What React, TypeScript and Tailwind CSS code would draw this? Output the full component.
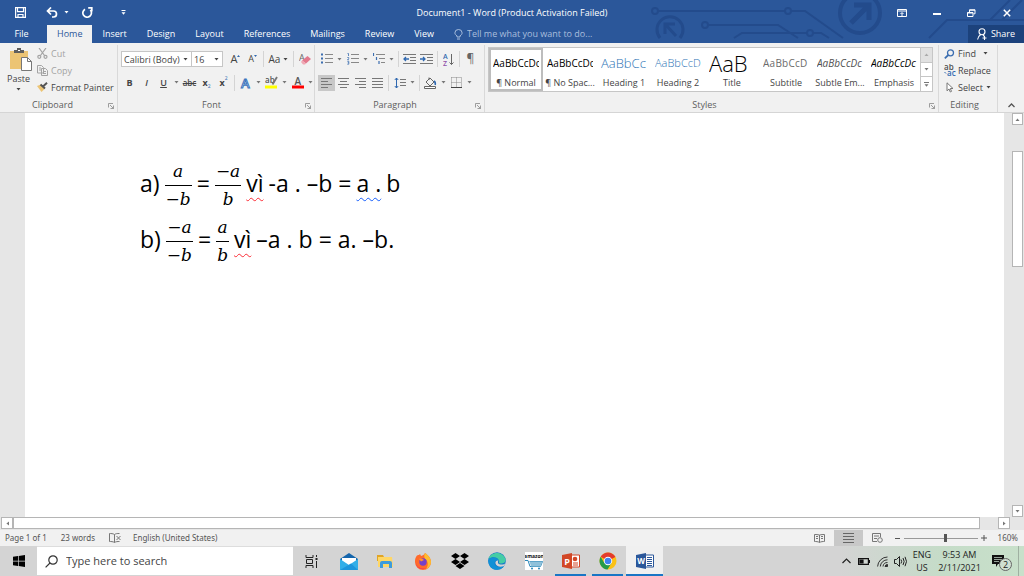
import type { ReactNode } from "react";

const tabs = ["Home", "Insert", "Design", "Layout", "References", "Mailings", "Review", "View"];

const styles = [
  { label: "¶ Normal", sample: "AaBbCcDc", look: "text-[10px] text-black", active: true },
  { label: "¶ No Spac...", sample: "AaBbCcDc", look: "text-[10px] text-black" },
  { label: "Heading 1", sample: "AaBbCc", look: "text-[13px] font-light text-[#2e74b5]" },
  { label: "Heading 2", sample: "AaBbCcD", look: "text-[11px] font-light text-[#2e74b5]" },
  { label: "Title", sample: "AaB", look: "text-[22px] font-light text-black" },
  { label: "Subtitle", sample: "AaBbCcD", look: "text-[10px] tracking-wide text-[#6b6b6b]" },
  { label: "Subtle Em...", sample: "AaBbCcDc", look: "text-[10px] italic text-[#505050]" },
  { label: "Emphasis", sample: "AaBbCcDc", look: "text-[10px] italic text-black" },
];

/** Small triangle used by every drop-down in the ribbon. */
function Caret({ className = "" }: { className?: string }) {
  return (
    <svg aria-hidden="true" width="5" height="3" viewBox="0 0 5 3" className={className} fill="currentColor">
      <path d="M0.5 0h4L2.5 2.6z" />
    </svg>
  );
}

function CaretButton({ label }: { label: string }) {
  return (
    <button type="button" aria-label={label} className="flex h-4 w-[9px] shrink-0 items-center justify-center text-[#777]">
      <Caret />
    </button>
  );
}

function Tool({ label, active, children }: { label: string; active?: boolean; children: ReactNode }) {
  return (
    <button
      type="button"
      aria-label={label}
      className={`flex h-4 w-[17px] shrink-0 items-center justify-center ${active ? "bg-[#c8c8c8]" : ""}`}
    >
      {children}
    </button>
  );
}

function Divider() {
  return <span className="mx-[2px] h-4 w-px shrink-0 bg-[#d4d4d4]" />;
}

function Launcher({ label }: { label: string }) {
  return (
    <button type="button" aria-label={label} className="absolute right-[3px] bottom-[3px] text-[#888]">
      <svg aria-hidden="true" width="6" height="6" viewBox="0 0 6 6" fill="none" stroke="currentColor" strokeWidth="0.8">
        <path d="M0.5 4.500V0.5H5M2 2l3.500 3.500M5.500 2.500v3h-3" />
      </svg>
    </button>
  );
}

function Group({ title, className = "", launcher = true, children }: {
  title: string;
  className?: string;
  launcher?: boolean;
  children: ReactNode;
}) {
  return (
    <section aria-label={title} className={`relative flex flex-col border-r border-[#d9d9d9] ${className}`}>
      <div className="h-[53px]">{children}</div>
      <div className="pr-3 text-center leading-[14px] text-[#5c5c5c]">{title}</div>
      {launcher && <Launcher label={`${title} settings`} />}
    </section>
  );
}

function Lines({ kind }: { kind: "left" | "center" | "right" | "justify" }) {
  const d = {
    left: "M0 .5h11M0 3.5h7M0 6.5h11M0 9.5h7",
    center: "M0 .5h11M2 3.5h7M0 6.5h11M2 9.5h7",
    right: "M0 .5h11M4 3.5h7M0 6.5h11M4 9.5h7",
    justify: "M0 .5h11M0 3.5h11M0 6.5h11M0 9.5h11",
  }[kind];
  return (
    <svg aria-hidden="true" width="11" height="10" viewBox="0 0 11 10" stroke="#777" strokeWidth="1">
      <path d={d} />
    </svg>
  );
}

function ListIcon({ kind }: { kind: "bullet" | "number" | "multi" }) {
  return (
    <svg aria-hidden="true" width="12" height="12" viewBox="0 0 12 12">
      {kind === "multi" ? (
        <>
          <path d="M3 1.5h9M6 5.5h6M8 9.5h4" stroke="#888" />
          <path d="M.5 0v3M3.5 4v3M6 8v3" stroke="#3c6eb0" strokeWidth="1.2" />
        </>
      ) : (
        <>
          <path d="M4 1.5h8M4 5.5h8M4 9.5h8" stroke="#888" />
          {kind === "bullet" ? (
            <path d="M0 .5h2v2H0zM0 4.5h2v2H0zM0 8.5h2v2H0z" fill="#3c6eb0" />
          ) : (
            <path d="M.5 .5h1v2.5M.3 4.5h1.4v1L.5 6.7h1.5M.3 8.3h1.5v2.9H.3M.8 9.7h1" fill="none" stroke="#3c6eb0" strokeWidth=".8" />
          )}
        </>
      )}
    </svg>
  );
}

function IndentIcon({ out }: { out?: boolean }) {
  return (
    <svg aria-hidden="true" width="13" height="11" viewBox="0 0 13 11" fill="none">
      <path d="M0 .5h13M7 3.5h6M7 6.5h6M0 9.5h13" stroke="#777" />
      <path d={out ? "M6 5H1M3 3L1 5l2 2" : "M0 5h5M3 3l2 2-2 2"} stroke="#2f68b0" strokeWidth="1.3" />
    </svg>
  );
}

function TitleArt() {
  return (
    <svg
      aria-hidden="true"
      width="404"
      height="39"
      viewBox="0 0 404 39"
      fill="none"
      stroke="#234b8c"
      strokeWidth="2"
      className="pointer-events-none absolute top-0 right-0"
    >
      <circle cx="35" cy="11" r="3" />
      <path d="M38 11h127M171 11h14l38 27" />
      <circle cx="168" cy="11" r="3" />
      <circle cx="85" cy="25" r="3" />
      <path d="M88 25h70l20 13M114 38l8-5h65M193 33h8l8 5" />
      <circle cx="190" cy="33" r="3" />
      <path d="M40 38a13 13 0 1 1 20 0" strokeWidth="3" />
      <path d="M56 36L46 25M45 34V24h10" strokeWidth="3" />
      <circle cx="240" cy="13" r="20" strokeWidth="4" />
      <path d="M231 23l17-17M234 5h15v15" strokeWidth="5" />
      <path d="M309 38l18-18h77M370 20l20-20M382 20l20-20" />
    </svg>
  );
}

function TitleBar() {
  return (
    <header className="relative h-[43px] shrink-0 bg-[#2b579a] text-white">
      <TitleArt />
      <div className="relative grid h-[25px] grid-cols-3">
        <div className="flex items-center pl-3">
          <button type="button" aria-label="Save" className="flex w-4 justify-center">
            <svg width="11" height="11" viewBox="0 0 11 11" fill="none" stroke="white" strokeWidth="1.2">
              <path d="M.6.6h9.8v9.8H.6zM2.5.6v4h6v-4M3 10.4V7.5h5v2.9" />
            </svg>
          </button>
          <button type="button" aria-label="Undo" className="ml-4 flex w-4 justify-center">
            <svg width="12" height="11" viewBox="0 0 12 11" fill="none" stroke="white" strokeWidth="1.7">
              <path d="M5 .5L1.5 4 5 7.5M2 4h5.5a3 3 0 0 1 0 6H6" />
            </svg>
          </button>
          <Caret className="ml-1" />
          <button type="button" aria-label="Redo" className="ml-[10px] flex w-4 justify-center">
            <svg width="11" height="12" viewBox="0 0 11 12" fill="none" stroke="white" strokeWidth="1.7">
              <path d="M3 2.2A4.3 4.3 0 1 0 8.3 3M6.2.8h3.6v3.6" />
            </svg>
          </button>
          <button type="button" aria-label="Customize Quick Access Toolbar" className="ml-5 flex w-4 justify-center">
            <svg width="5" height="5" viewBox="0 0 5 5" fill="white">
              <path d="M.5 0h4v1h-4zM.5 2.2h4L2.5 4.8z" />
            </svg>
          </button>
        </div>
        <h1 className="flex items-center justify-center whitespace-nowrap">Document1 - Word (Product Activation Failed)</h1>
        <div className="flex items-center justify-end pr-[10px]">
          <button type="button" aria-label="Ribbon display options" className="flex w-[35px] justify-center">
            <svg width="10" height="8" viewBox="0 0 10 8" fill="none" stroke="white">
              <path d="M.5.5h9v7h-9zM.5 2h9M3.500 5L5 3.500 6.500 5M5 4v3" />
            </svg>
          </button>
          <button type="button" aria-label="Minimize" className="flex w-[35px] justify-center">
            <svg width="8" height="8" viewBox="0 0 8 8"><path d="M0 5h8" stroke="white" strokeWidth="2" /></svg>
          </button>
          <button type="button" aria-label="Restore" className="flex w-[35px] justify-center">
            <svg width="9" height="8" viewBox="0 0 9 8" fill="none" stroke="white">
              <path d="M.5 3.500h5.500v4H.5zM2.500 3V.8h5.500v4H6.500M2.500 1.200h5.500M.5 4h5.500" />
            </svg>
          </button>
          <button type="button" aria-label="Close" className="ml-[10px] flex w-[15px] justify-center">
            <svg width="8" height="8" viewBox="0 0 8 8"><path d="M.8.8l6.400 6.400M7.200.8L.8 7.200" stroke="white" strokeWidth="1.500" /></svg>
          </button>
        </div>
      </div>
      <nav aria-label="Ribbon tabs" className="relative flex h-[18px] items-stretch">
        <button type="button" className="mr-1 w-[43px]">File</button>
        {tabs.map((tab) => (
          <button
            key={tab}
            type="button"
            className={`px-[10px] ${tab === "Home" ? "bg-[#f1f1f1] text-[#2b579a]" : ""}`}
          >
            {tab}
          </button>
        ))}
        <label className="ml-[10px] flex flex-1 items-center gap-1">
          <svg aria-hidden="true" width="9" height="11" viewBox="0 0 9 11" fill="none" stroke="#a9bedd">
            <path d="M3 8V6.800C1.500 6 .9 5 .9 3.900a3.600 3.400 0 0 1 7.200 0C8.100 5 7.500 6 6 6.800V8zM3 10h3" />
          </svg>
          <input
            aria-label="Tell me what you want to do"
            placeholder="Tell me what you want to do..."
            className="w-40 bg-transparent outline-none placeholder:text-[#a9bedd]"
          />
        </label>
        <button type="button" className="flex w-14 items-center justify-center gap-1 bg-[#1c427c]">
          <svg aria-hidden="true" width="10" height="12" viewBox="0 0 10 12" fill="none" stroke="white" strokeWidth="1.100">
            <circle cx="5" cy="3.800" r="3" />
            <path d="M.6 11.500c.3-2.500 1.500-4 3-4.800M6 7l1.500 1.500M5.500 10h4M7.500 8v4" />
          </svg>
          Share
        </button>
      </nav>
    </header>
  );
}

function Ribbon() {
  return (
    <div className="flex h-[70px] shrink-0 border-b border-[#d5d5d5] bg-[#f1f1f1] pt-[2px] text-[#444]">
      <Group title="Clipboard" className="w-[118px]">
        <div className="flex">
          <button type="button" className="flex w-[37px] flex-col items-center leading-[13px]">
            <svg aria-hidden="true" width="22" height="25" viewBox="0 0 22 25" className="mt-[2px] ml-1">
              <path d="M0 4h18v18H0z" fill="#ecc474" />
              <path d="M4 3h3V1h4v2h3v3H4z" fill="#5e5e5e" />
              <path d="M8 3h2v1H8z" fill="#fff" />
              <path d="M11.500 10.500h6l4 4v9h-10z" fill="#fff" stroke="#777" />
              <path d="M17.500 10.500v4h4" fill="none" stroke="#777" />
            </svg>
            Paste
            <Caret className="mt-[3px]" />
          </button>
          <div className="flex flex-col text-left">
            <button type="button" className="flex h-[17px] items-center gap-[3px] text-[#a3a3a3]">
              <svg aria-hidden="true" width="11" height="11" viewBox="0 0 11 11" fill="none" stroke="#a3a3a3" strokeWidth="1.200">
                <path d="M2 0l5.500 7.500M9 0L3.500 7.500" />
                <circle cx="2.300" cy="8.800" r="1.500" />
                <circle cx="8.500" cy="8.800" r="1.500" />
              </svg>
              Cut
            </button>
            <button type="button" className="flex h-[17px] items-center gap-[3px] text-[#a3a3a3]">
              <svg aria-hidden="true" width="11" height="11" viewBox="0 0 11 11" fill="#f1f1f1" stroke="#a3a3a3">
                <path d="M.5.5h4l2 2v5.500h-6zM4.500 3.500h4l2 2v5h-6zM6 6.500h3M6 8.500h3M2 3h2M2 5h2" />
              </svg>
              Copy
            </button>
            <button type="button" className="flex h-[17px] items-center gap-[3px] whitespace-nowrap">
              <svg aria-hidden="true" width="11" height="11" viewBox="0 0 11 11">
                <path d="M0 4l4-1.500L7.500 7 4.500 10z" fill="#ecc474" />
                <path d="M3.500 2.500l4.500 4M6 4.500L10 .8" stroke="#555" strokeWidth="2" />
              </svg>
              Format Painter
            </button>
          </div>
        </div>
      </Group>

      <Group title="Font" className="w-[197px] pl-[3px]">
        <div className="flex h-[25px] items-center pt-[3px]">
          <div className="relative h-4 w-[71px]">
            <select aria-label="Font" className="h-4 w-full appearance-none border border-[#c6c6c6] bg-white px-[2px] leading-none">
              <option>Calibri (Body)</option>
            </select>
            <Caret className="pointer-events-none absolute top-[7px] right-1" />
          </div>
          <div className="relative -ml-px h-4 w-8">
            <select aria-label="Font size" className="h-4 w-full appearance-none border border-[#c6c6c6] bg-white px-[2px] leading-none">
              <option>16</option>
            </select>
            <Caret className="pointer-events-none absolute top-[7px] right-1" />
          </div>
          <span className="w-1" />
          <Tool label="Grow font">
            <span className="text-[11px]">A</span>
            <svg aria-hidden="true" width="3" height="8" viewBox="0 0 3 8"><path d="M0 2l1.500-2L3 2z" fill="#2f68b0" /></svg>
          </Tool>
          <Tool label="Shrink font">
            <span>A</span>
            <svg aria-hidden="true" width="3" height="8" viewBox="0 0 3 8"><path d="M0 0h3L1.500 2z" fill="#2f68b0" /></svg>
          </Tool>
          <Divider />
          <button type="button" aria-label="Change case" className="flex w-[25px] items-center justify-center gap-[3px] text-[10px]">
            Aa
            <Caret />
          </button>
          <Divider />
          <Tool label="Clear formatting">
            <svg width="12" height="12" viewBox="0 0 12 12">
              <text x="0" y="8" fontSize="9" fill="#666">A</text>
              <path d="M3 7.500L8.500 3 12 6 7 10.500z" fill="#e3798d" />
              <path d="M3 7.500l4 3-1 1H4L2 9z" fill="#f0a8b4" />
            </svg>
          </Tool>
        </div>
        <div className="flex h-[25px] items-center">
          <Tool label="Bold"><b>B</b></Tool>
          <Tool label="Italic"><i className="font-semibold">I</i></Tool>
          <Tool label="Underline"><u className="font-semibold">U</u></Tool>
          <CaretButton label="Underline style" />
          <Tool label="Strikethrough"><s className="text-[8px] font-semibold">abc</s></Tool>
          <Tool label="Subscript"><b>x</b><span className="mt-2 text-[5px] text-[#2f68b0]">2</span></Tool>
          <Tool label="Superscript"><b>x</b><span className="mb-2 text-[5px] text-[#2f68b0]">2</span></Tool>
          <Divider />
          <Tool label="Text effects">
            <svg width="12" height="12" viewBox="0 0 12 12">
              <text x="1" y="10.500" fontSize="13" fontWeight="600" fill="#fff" stroke="#3c74bd" strokeWidth="1">A</text>
            </svg>
          </Tool>
          <CaretButton label="Text effects menu" />
          <Tool label="Highlight color">
            <svg width="13" height="13" viewBox="0 0 13 13">
              <text x="0" y="7" fontSize="8" fontWeight="600" fill="#555">ab</text>
              <path d="M12 1L7.500 8.500" stroke="#777" strokeWidth="1.800" />
              <path d="M0 9.500h12v3H0z" fill="#ff0" />
            </svg>
          </Tool>
          <CaretButton label="Highlight colors" />
          <Tool label="Font color">
            <svg width="12" height="13" viewBox="0 0 12 13">
              <text x="2.500" y="8.500" fontSize="10" fontWeight="600" fill="#555">A</text>
              <path d="M0 9.500h12v3H0z" fill="#f00" />
            </svg>
          </Tool>
          <CaretButton label="Font colors" />
        </div>
      </Group>

      <Group title="Paragraph" className="w-[170px] pl-[3px]">
        <div className="flex h-[25px] items-center pt-[3px]">
          <Tool label="Bullets"><ListIcon kind="bullet" /></Tool>
          <CaretButton label="Bullet library" />
          <Tool label="Numbering"><ListIcon kind="number" /></Tool>
          <CaretButton label="Numbering library" />
          <Tool label="Multilevel list"><ListIcon kind="multi" /></Tool>
          <CaretButton label="List library" />
          <Divider />
          <Tool label="Decrease indent"><IndentIcon out /></Tool>
          <Tool label="Increase indent"><IndentIcon /></Tool>
          <Divider />
          <Tool label="Sort">
            <svg width="12" height="13" viewBox="0 0 12 13" fill="none">
              <text x="0" y="6" fontSize="7" fontWeight="600" fill="#2f68b0">A</text>
              <text x="0" y="12.500" fontSize="7" fontWeight="600" fill="#8f4fa8">Z</text>
              <path d="M8.500 1v10.500M6.500 9.500l2 2 2-2" stroke="#666" />
            </svg>
          </Tool>
          <Divider />
          <Tool label="Show formatting marks"><span className="text-[12px] text-[#666]">¶</span></Tool>
        </div>
        <div className="flex h-[25px] items-center">
          <Tool label="Align left" active><Lines kind="left" /></Tool>
          <Tool label="Center"><Lines kind="center" /></Tool>
          <Tool label="Align right"><Lines kind="right" /></Tool>
          <Tool label="Justify"><Lines kind="justify" /></Tool>
          <Divider />
          <Tool label="Line spacing">
            <svg width="12" height="12" viewBox="0 0 12 12" fill="none">
              <path d="M2.500 1v10M.8 3l1.700-2 1.700 2M.8 9l1.700 2 1.700-2" stroke="#2f68b0" />
              <path d="M6 2.500h6M6 5.500h6M6 8.500h6" stroke="#777" />
            </svg>
          </Tool>
          <CaretButton label="Line spacing options" />
          <Divider />
          <Tool label="Shading">
            <svg width="13" height="12" viewBox="0 0 13 12" fill="none" stroke="#666">
              <path d="M2 5l4-4 4 4-4 4zM5 3V.5" />
              <path d="M10 4c1.500 1 1.500 2.500 1.200 4" stroke="#2f68b0" strokeWidth="1.600" />
              <path d="M.5 9.500h11v2H.5z" fill="#fff" />
            </svg>
          </Tool>
          <CaretButton label="Shading colors" />
          <Tool label="Borders">
            <svg width="11" height="11" viewBox="0 0 11 11" fill="none" stroke="#888">
              <path d="M.5.5h10v10M.5.5v10M5.500.5v10M.5 5.500h10" strokeDasharray="1 1" />
              <path d="M0 10.500h11" stroke="#444" />
            </svg>
          </Tool>
          <CaretButton label="Border options" />
        </div>
      </Group>

      <Group title="Styles" className="min-w-0 flex-1 pr-[5px] pl-[3px]">
        <div className="mt-[2px] flex h-[45px] border border-[#c6c6c6] bg-white">
          <div className="flex min-w-0 flex-1 overflow-hidden">
            {styles.map((s) => (
              <button
                key={s.label}
                type="button"
                className={`flex w-[54px] shrink-0 flex-col items-center border-2 ${s.active ? "border-[#bdbdbd]" : "border-transparent"}`}
              >
                <span className={`h-[26px] w-[46px] overflow-hidden text-left leading-[26px] whitespace-nowrap ${s.look}`}>{s.sample}</span>
                <span className="leading-[13px] whitespace-nowrap">{s.label}</span>
              </button>
            ))}
          </div>
          <div className="flex w-3 flex-col divide-y divide-[#c6c6c6] border-l border-[#c6c6c6] text-[#777]">
            <button type="button" aria-label="Previous styles" className="flex flex-1 items-center justify-center bg-[#e1e1e1] text-[#aaa]">
              <Caret className="rotate-180" />
            </button>
            <button type="button" aria-label="Next styles" className="flex flex-1 items-center justify-center"><Caret /></button>
            <button type="button" aria-label="More styles" className="flex flex-1 items-center justify-center">
              <svg width="5" height="5" viewBox="0 0 5 5" fill="currentColor"><path d="M0 0h5v1H0zM.5 2.200h4L2.500 4.800z" /></svg>
            </button>
          </div>
        </div>
      </Group>

      <Group title="Editing" launcher={false} className="w-[59px] pl-[5px]">
        <div className="flex flex-col">
          <button type="button" className="flex h-[17px] items-center gap-[3px]">
            <svg aria-hidden="true" width="11" height="10" viewBox="0 0 11 10" fill="none" stroke="#3c6eb0" strokeWidth="1.300">
              <circle cx="6.500" cy="3.800" r="3" />
              <path d="M4.300 6L.8 9.300" strokeWidth="1.800" />
            </svg>
            Find
            <Caret className="ml-1" />
          </button>
          <button type="button" className="flex h-[17px] items-center gap-[2px]">
            <svg aria-hidden="true" width="12" height="13" viewBox="0 0 12 13">
              <text x="0" y="6" fontSize="8" fontWeight="600" fill="#4f4f4f">ab</text>
              <text x="3" y="12" fontSize="8" fontWeight="600" fill="#2f68b0">ac</text>
              <path d="M.5 8l1.500 1.500" stroke="#2f68b0" />
            </svg>
            Replace
          </button>
          <button type="button" className="flex h-[17px] items-center gap-[3px]">
            <svg aria-hidden="true" width="11" height="11" viewBox="0 0 11 11" fill="#fff" stroke="#777">
              <path d="M3 .8v8l2-1.800 1.300 3 1.200-.6L6.300 6.500H9z" />
            </svg>
            Select
            <Caret />
          </button>
        </div>
      </Group>

      <div className="flex w-[26px] items-end justify-center pb-1">
        <button type="button" aria-label="Collapse the ribbon">
          <svg width="7" height="5" viewBox="0 0 7 5" fill="none" stroke="#555" strokeWidth="1.300"><path d="M.5 4l3-3 3 3" /></svg>
        </button>
      </div>
    </div>
  );
}

function Fraction({ top, bottom }: { top: string; bottom: string }) {
  return (
    <span className="flex flex-col pt-1 text-center font-['DejaVu_Serif','Liberation_Serif',serif] text-[17px] leading-[27px] italic">
      <span className="border-b border-black px-px">{top}</span>
      <span className="px-px">{bottom}</span>
    </span>
  );
}

/** Wavy proofing line under a word; red for spelling, blue for grammar. */
function Proofed({ kind, children }: { kind: "spelling" | "grammar"; children: ReactNode }) {
  return (
    <span
      className={`underline decoration-wavy decoration-1 underline-offset-[5px] ${kind === "spelling" ? "decoration-red-500" : "decoration-blue-600"}`}
    >
      {children}
    </span>
  );
}

function Document() {
  return (
    <main className="flex min-h-0 flex-1 bg-[#e6e6e6]">
      <article
        lang="vi"
        className="ml-[25px] flex-1 bg-white pt-[42px] pl-[115px] font-['Open_Sans',sans-serif] text-[23px] text-black"
      >
        <p className="flex h-14 items-center gap-[5px] whitespace-nowrap">
          <span>a)</span>
          <Fraction top="a" bottom="−b" />
          <span>=</span>
          <Fraction top="−a" bottom="b" />
          <Proofed kind="spelling">vì</Proofed>
          <span>-a . –b =</span>
          <Proofed kind="grammar">a .</Proofed>
          <span>b</span>
        </p>
        <p className="flex h-14 items-center gap-[5px] whitespace-nowrap">
          <span>b)</span>
          <Fraction top="−a" bottom="−b" />
          <span>=</span>
          <Fraction top="a" bottom="b" />
          <Proofed kind="spelling">vì</Proofed>
          <span>–a . b = a. –b.</span>
        </p>
      </article>
      <div className="ml-2 flex w-3 flex-col pr-px">
        <button type="button" aria-label="Scroll up" className="flex h-3 items-center justify-center border border-[#b5b5b5] bg-white text-[#777]">
          <Caret className="rotate-180" />
        </button>
        <div className="flex-1 pt-[26px]">
          <div className="h-[116px] border border-[#b5b5b5] bg-white" />
        </div>
        <button type="button" aria-label="Scroll down" className="flex h-3 items-center justify-center border border-[#b5b5b5] bg-white text-[#777]">
          <Caret />
        </button>
      </div>
    </main>
  );
}

function HorizontalScroll() {
  return (
    <div className="flex h-[13px] shrink-0 bg-[#e6e6e6] pb-px pl-px text-[#777]">
      <button type="button" aria-label="Scroll left" className="flex w-3 items-center justify-center border border-[#b5b5b5] bg-white">
        <Caret className="rotate-90" />
      </button>
      <div className="flex-1 border border-[#b5b5b5] bg-white" />
      <button type="button" aria-label="Scroll right" className="mr-[14px] ml-[18px] flex w-3 items-center justify-center border border-[#b5b5b5] bg-white">
        <Caret className="-rotate-90" />
      </button>
    </div>
  );
}

function StatusBar() {
  return (
    <footer className="flex h-4 shrink-0 items-center bg-[#f1f1f1] pl-[5px] font-['Noto_Sans',sans-serif] text-[8px] text-[#555]">
      <span>Page 1 of 1</span>
      <span className="ml-[14px]">23 words</span>
      <button type="button" aria-label="Proofing errors" className="ml-[14px]">
        <svg width="12" height="10" viewBox="0 0 12 10" fill="none" stroke="#777">
          <path d="M5.500 1.500C4 .5 2 .5.5.5v8c1.500 0 3.500 0 5 1zM5.500 1.500C7 .5 8 .5 10.500.5M5.500 9.500c1.500-1 3-1 5-1M7.500 3l4 4M11.500 3l-4 4" />
        </svg>
      </button>
      <span className="ml-3 flex-1">English (United States)</span>
      <button type="button" aria-label="Read mode" className="flex h-4 w-[29px] items-center justify-center">
        <svg width="11" height="9" viewBox="0 0 11 9" fill="none" stroke="#777">
          <path d="M5.500 1C4 .5 2 .5.5.5v7c1.500 0 3.500 0 5 1 1.500-1 3.500-1 5-1v-7c-1.500 0-3.500 0-5 .5v7.500M2 2.500h2M2 4.500h2M7 2.500h2M7 4.500h2" />
        </svg>
      </button>
      <button type="button" aria-label="Print layout" className="flex h-4 w-[29px] items-center justify-center bg-[#c8c8c8]">
        <svg width="11" height="10" viewBox="0 0 11 10" stroke="#666"><path d="M0 .5h11M0 3.500h11M0 6.500h11M0 9.500h11" /></svg>
      </button>
      <button type="button" aria-label="Web layout" className="flex h-4 w-[29px] items-center justify-center">
        <svg width="11" height="10" viewBox="0 0 11 10" fill="none" stroke="#777">
          <path d="M8.500 4V.5h-8v8H5M2 3h5M2 5.500h3" />
          <circle cx="8" cy="7" r="2.300" />
        </svg>
      </button>
      <button type="button" aria-label="Zoom out" className="ml-[3px] flex w-[6px] justify-center">
        <svg width="5" height="5" viewBox="0 0 5 5" stroke="#555"><path d="M0 2.500h5" /></svg>
      </button>
      <input
        type="range"
        aria-label="Zoom"
        min={0}
        max={100}
        defaultValue={57}
        className="mx-[3px] h-2 w-[74px] appearance-none bg-[linear-gradient(#999,#999)] bg-[length:100%_1px] bg-center bg-no-repeat [&::-webkit-slider-thumb]:h-2 [&::-webkit-slider-thumb]:w-[3px] [&::-webkit-slider-thumb]:appearance-none [&::-webkit-slider-thumb]:bg-[#555]"
      />
      <button type="button" aria-label="Zoom in" className="flex w-[6px] justify-center">
        <svg width="6" height="6" viewBox="0 0 6 6" stroke="#555"><path d="M0 3h6M3 0v6" /></svg>
      </button>
      <span className="mr-[6px] ml-[11px]">160%</span>
    </footer>
  );
}

const apps: { name: string; state?: "open" | "active"; icon: ReactNode }[] = [
  {
    name: "Task view",
    icon: (
      <svg width="13" height="13" viewBox="0 0 13 13" fill="none" stroke="#222">
        <path d="M1 0v2.500h7V0M1 13v-2.500h7V13M1.500 4.500h6v4h-6zM11.500 0v2M11.500 6v7" />
        <path d="M10.500 3h2v2h-2z" fill="#222" stroke="none" />
      </svg>
    ),
  },
  {
    name: "Mail",
    icon: (
      <svg width="18" height="17" viewBox="0 0 18 17">
        <path d="M0 6l9-6 9 6v11H0z" fill="#1465ac" />
        <path d="M2 5h14v7H2z" fill="#fff" />
        <path d="M0 6l9 6 9-6v11H0z" fill="#31aee8" />
        <path d="M0 17l11-6.500L18 17z" fill="#1c95dc" />
      </svg>
    ),
  },
  {
    name: "File Explorer",
    icon: (
      <svg width="17" height="15" viewBox="0 0 17 15">
        <path d="M0 1h6l1 2h8v4H0z" fill="#e0a526" />
        <path d="M1 3h14l1 10H1z" fill="#ffd766" />
        <path d="M3 14V9q0-2 2-2h8q2 0 2 2v5h-3v-4H6v4z" fill="#3d9bdc" />
      </svg>
    ),
  },
  {
    name: "Firefox",
    icon: (
      <svg width="18" height="18" viewBox="0 0 18 18">
        <path d="M2 5C3 3 4 3 5 3l1-1 1 2c2-1 3-1 4-3 3 2 6 5 6 9a8 8 0 0 1-16 0c0-2 0-3 1-5z" fill="#ff6a2b" />
        <path d="M11 1c3 2 6 5 6 9 0 3-2 6-5 7 3-4 2-8-1-10-1-2-1-4 0-6z" fill="#ffbd2e" />
        <path d="M1.500 8c0 7 6 10 11 8-3 2-11 2-11-8z" fill="#f0315f" />
        <circle cx="9" cy="10" r="3.700" fill="#7540c8" />
        <path d="M5 7c2-1 4 0 5 1l-3 1.500z" fill="#ff922e" />
      </svg>
    ),
  },
  {
    name: "Dropbox",
    icon: (
      <svg width="18" height="16" viewBox="0 0 18 16" fill="#000">
        <path d="M4.500 0L9 3 4.500 6 0 3zM13.500 0L18 3l-4.500 3L9 3zM4.500 6L9 9l-4.500 3L0 9zM13.500 6L18 9l-4.500 3L9 9zM9 10l4.500 3L9 16l-4.500-3z" />
      </svg>
    ),
  },
  {
    name: "Edge",
    icon: (
      <svg width="18" height="18" viewBox="0 0 18 18">
        <circle cx="9" cy="9" r="8.800" fill="#1478c8" />
        <path d="M.5 7C2 0 14-2 17.500 7c.6 4-3 5-5.500 4.500-2-.5-.5-1.500-1-3C10 5 4 4 .5 7z" fill="#45cda5" />
        <path d="M.3 8C3 4 10 5 10.500 8.500 8 7.500 6 10 7 12.500S12 16 16 14c-5 7-16 4-15.700-6z" fill="#1190d6" />
        <path d="M10.500 8.500c-1 1.500-.8 3.500 2 4 2 .4 4-.3 5-1.500l-1.500 3c-4 2-8 0-8.500-2.500S9 8.500 10.500 8.500z" fill="#d4d4d4" />
      </svg>
    ),
  },
  {
    name: "Amazon",
    icon: (
      <svg width="18" height="18" viewBox="0 0 18 18">
        <path d="M0 0h18v18H0z" fill="#fff" />
        <text x="9" y="6" textAnchor="middle" fontSize="5" fontWeight="700" fill="#111">amazon</text>
        <path d="M0 8.500h3l2 6h10.500l2-5h-13" fill="none" stroke="#2a86b8" />
        <path d="M4.500 9.500h13l-2 5H6z" fill="#8fc1da" />
        <circle cx="7" cy="16.500" r="1" fill="#2a86b8" />
        <circle cx="14" cy="16.500" r="1" fill="#2a86b8" />
      </svg>
    ),
  },
  {
    name: "PowerPoint",
    state: "open",
    icon: (
      <svg width="18" height="16" viewBox="0 0 18 16">
        <path d="M9 2h8.500v12H9z" fill="#fff" stroke="#d24726" />
        <path d="M11 10h5M11 12h5" stroke="#d24726" />
        <circle cx="13" cy="6" r="2.300" fill="#d24726" />
        <path d="M0 2l10-2v16L0 14z" fill="#d24726" />
        <text x="5" y="11.500" textAnchor="middle" fontSize="9" fontWeight="700" fill="#fff">P</text>
      </svg>
    ),
  },
  {
    name: "Chrome",
    state: "open",
    icon: (
      <svg width="18" height="18" viewBox="0 0 18 18">
        <circle cx="9" cy="9" r="8.500" fill="#fbc116" />
        <path d="M9 9L1.640 4.750A8.500 8.500 0 0 1 16.360 4.750z" fill="#e33b2e" />
        <path d="M9 4.750h7.360L9 9z" fill="#e33b2e" />
        <path d="M1.640 4.750A8.500 8.500 0 0 0 8.500 17.480L12.500 11 5.400 11z" fill="#269a48" />
        <circle cx="9" cy="9" r="4.200" fill="#fff" />
        <circle cx="9" cy="9" r="3.300" fill="#3f82ee" />
      </svg>
    ),
  },
  {
    name: "Word",
    state: "active",
    icon: (
      <svg width="18" height="16" viewBox="0 0 18 16">
        <path d="M9 2h8.500v12H9z" fill="#fff" stroke="#2b579a" />
        <path d="M11 4.500h5M11 6.500h5M11 8.500h5M11 10.500h5M11 12.500h5" stroke="#2b579a" />
        <path d="M0 2l10-2v16L0 14z" fill="#2b579a" />
        <text x="5" y="11" textAnchor="middle" fontSize="8" fontWeight="700" fill="#fff">W</text>
      </svg>
    ),
  },
];

function Taskbar() {
  return (
    <div className="flex h-[30px] shrink-0 bg-[linear-gradient(90deg,#d4d4d4_0%,#d4d4d4_82%,#c5dcc8_92%,#c8e0ca_100%)] text-[#222]">
      <button type="button" aria-label="Start" className="flex w-[37px] items-center justify-center">
        <svg width="12" height="12" viewBox="0 0 12 12" fill="#000">
          <path d="M0 1.800l5-.8v4.700H0zM5.700.9L12 0v5.700H5.700zM0 6.400h5V11l-5-.8zM5.700 6.400H12V12l-6.300-.9z" />
        </svg>
      </button>
      <label className="mb-px flex w-64 items-center gap-2 border-t border-[#ddd] bg-white pl-2">
        <svg aria-hidden="true" width="13" height="13" viewBox="0 0 13 13" fill="none" stroke="#333" strokeWidth="1.200">
          <circle cx="8" cy="5" r="4.200" />
          <path d="M5 8L.6 12.400" />
        </svg>
        <input
          aria-label="Search"
          placeholder="Type here to search"
          className="min-w-0 flex-1 bg-transparent text-[11px] outline-none placeholder:text-[#444]"
        />
      </label>
      <div className="flex flex-1">
        {apps.map((app) => (
          <button
            key={app.name}
            type="button"
            aria-label={app.name}
            className={`relative flex w-[37px] shrink-0 items-center justify-center ${app.state === "active" ? "bg-[#f0f0f0]" : ""}`}
          >
            {app.icon}
            {app.state && (
              <span className={`absolute bottom-0 h-[2px] bg-[#1976c5] ${app.state === "active" ? "inset-x-0" : "inset-x-[3px]"}`} />
            )}
          </button>
        ))}
      </div>
      <div className="flex items-center">
        <button type="button" aria-label="Show hidden icons" className="flex w-[18px] justify-center">
          <svg width="9" height="6" viewBox="0 0 9 6" fill="none" stroke="#222" strokeWidth="1.200"><path d="M.5 5l4-4 4 4" /></svg>
        </button>
        <button type="button" aria-label="Battery" className="flex w-[18px] justify-center">
          <svg width="12" height="7" viewBox="0 0 12 7" fill="none" stroke="#111" strokeWidth="1.200">
            <path d="M.6.6h9.800v5.800H.6zM11.500 2v3" />
            <path d="M2 2h3v3H2z" fill="#111" />
          </svg>
        </button>
        <button type="button" aria-label="Network" className="flex w-[18px] justify-center">
          <svg width="11" height="11" viewBox="0 0 11 11" fill="none" stroke="#333">
            <path d="M.6 10.500A10 10 0 0 1 10.500 1M3.300 10.500A7.200 7.200 0 0 1 10.500 3.800M6 10.500a4.500 4.500 0 0 1 4.500-4" />
            <path d="M8 10.500A2.500 2.500 0 0 1 10.500 8.500v2z" fill="#333" />
          </svg>
        </button>
        <button type="button" aria-label="Volume" className="flex w-[18px] justify-center">
          <svg width="13" height="11" viewBox="0 0 13 11" fill="none" stroke="#222">
            <path d="M.5 3.500h2l3-3v10l-3-3h-2zM7 3.500q1.300 2 0 4M9 2q2.300 3.500 0 7M11 .8q3 4.700 0 9.400" />
          </svg>
        </button>
        <div className="flex w-[26px] flex-col items-center leading-[13px]">
          <span>ENG</span>
          <span>US</span>
        </div>
        <time dateTime="2021-02-11T09:53" className="flex w-[49px] flex-col items-center leading-[13px] whitespace-nowrap">
          <span>9:53 AM</span>
          <span>2/11/2021</span>
        </time>
        <button type="button" aria-label="2 new notifications" className="relative ml-2 flex h-5 w-5 pt-1">
          <svg width="13" height="12" viewBox="0 0 13 12">
            <path d="M0 0h12v9H6l-2 3V9H0z" fill="#111" />
            <path d="M2 2.500h8M2 4.500h8M2 6.500h5" stroke="#b8c8ba" strokeWidth=".8" />
          </svg>
          <span className="absolute right-0 bottom-0 flex h-[13px] w-[13px] items-center justify-center rounded-full border border-[#666] bg-[#d0dfd1]">
            2
          </span>
        </button>
        <span className="ml-[6px] h-[30px] w-[6px] border-l border-[#9fb0a1]" />
      </div>
    </div>
  );
}

export default function App() {
  return (
    <div className="flex h-screen flex-col overflow-hidden bg-[#e6e6e6] font-['Open_Sans','Noto_Sans',sans-serif] text-[9px]">
      <TitleBar />
      <Ribbon />
      <Document />
      <HorizontalScroll />
      <StatusBar />
      <Taskbar />
    </div>
  );
}
